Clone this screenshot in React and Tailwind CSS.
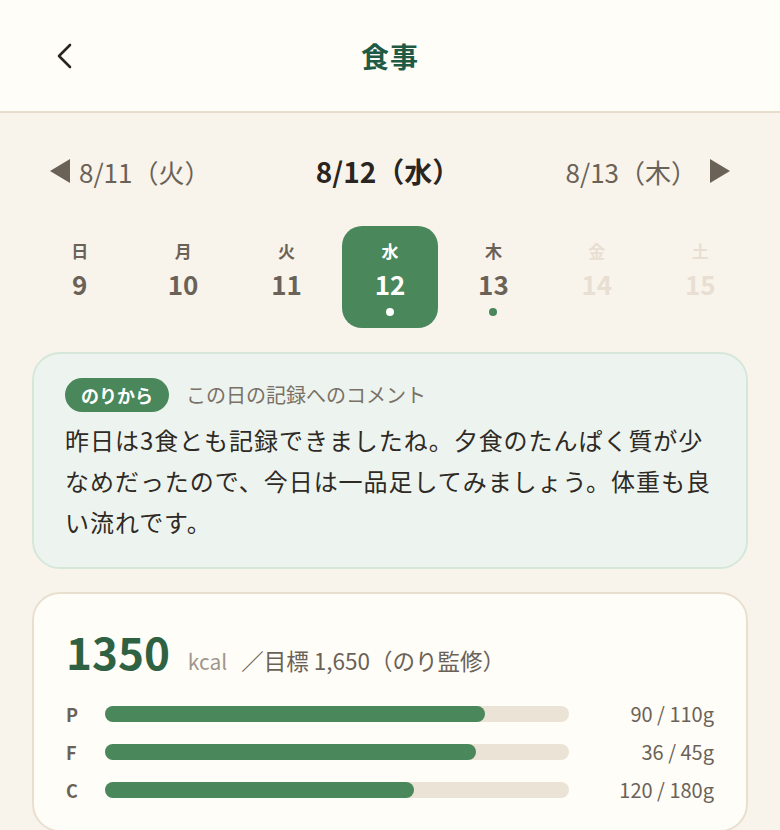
import React from "react";

const days = [
  { w: "日", d: 9, state: "normal" },
  { w: "月", d: 10, state: "normal" },
  { w: "火", d: 11, state: "normal" },
  { w: "水", d: 12, state: "selected" },
  { w: "木", d: 13, state: "dot" },
  { w: "金", d: 14, state: "disabled" },
  { w: "土", d: 15, state: "disabled" },
];

const macros = [
  { k: "P", v: 90, t: 110 },
  { k: "F", v: 36, t: 45 },
  { k: "C", v: 120, t: 180 },
];

function Day({ w, d, state }) {
  const selected = state === "selected";
  const disabled = state === "disabled";
  const color = selected ? "text-white" : disabled ? "text-[#e8dfd2]" : "text-[#6b6257]";
  return (
    <div
      className={`flex h-[102px] flex-col items-center rounded-[20px] pt-[13px] ${
        selected ? "bg-[#4a875b]" : ""
      } ${color}`}
    >
      <div className="text-[17px] font-bold leading-[24px]">{w}</div>
      <div className="mt-[4px] text-[26px] font-bold leading-[34px]">{d}</div>
      <div className="mt-[7px] h-[8px] w-[8px]">
        {selected && <div className="h-[8px] w-[8px] rounded-full bg-white" />}
        {state === "dot" && <div className="h-[8px] w-[8px] rounded-full bg-[#4a875b]" />}
      </div>
    </div>
  );
}

export default function App() {
  return (
    <div
      className="min-h-[830px] w-[780px] bg-[#f8f4ec]"
      style={{ fontFamily: '"Noto Sans CJK JP", "Noto Sans", sans-serif' }}
    >
      <header className="relative flex h-[113px] items-center justify-center border-b-2 border-[#e8dccb] bg-[#fffdf7]">
        <svg
          className="absolute left-[54px] top-[42px]"
          width="22"
          height="28"
          viewBox="0 0 22 28"
          fill="none"
        >
          <path d="M16 3 L5 14 L16 25" stroke="#2a2520" strokeWidth="2.6" strokeLinecap="round" strokeLinejoin="round" />
        </svg>
        <h1 className="text-[28px] font-bold tracking-[0.04em] text-[#1f5a44]">食事</h1>
      </header>

      <main className="px-[32px] pt-[36px]">
        <div className="flex h-[44px] items-center justify-between px-[18px]">
          <div className="flex items-center gap-[9px] text-[26px] text-[#6b6257]">
            <svg width="20" height="24" viewBox="0 0 20 24">
              <path d="M20 0 L0 12 L20 24 Z" fill="#6b6257" />
            </svg>
            <span>8/11（火）</span>
          </div>
          <div className="text-[28px] font-bold text-[#2a2520]">8/12（水）</div>
          <div className="flex items-center gap-[13px] text-[26px] text-[#6b6257]">
            <span>8/13（木）</span>
            <svg width="20" height="24" viewBox="0 0 20 24">
              <path d="M0 0 L20 12 L0 24 Z" fill="#6b6257" />
            </svg>
          </div>
        </div>

        <div className="mt-[33px] grid grid-cols-7 gap-[8px]">
          {days.map((x) => (
            <Day key={x.d} {...x} />
          ))}
        </div>

        <section className="mt-[24px] rounded-[28px] border-2 border-[#d6e7da] bg-[#edf4ef] px-[31px] pb-[25px] pt-[24px]">
          <div className="flex items-center gap-[17px]">
            <span className="flex h-[34px] items-center rounded-full bg-[#4a875b] px-[16px] text-[18px] font-bold text-white">
              のりから
            </span>
            <span className="text-[20px] text-[#7a7065]">この日の記録へのコメント</span>
          </div>
          <p className="mt-[7px] text-[24px] leading-[41px] tracking-[0.04em] text-[#2f2a25]">
            昨日は3食とも記録できましたね。夕食のたんぱく質が少なめだったので、今日は一品足してみましょう。体重も良い流れです。
          </p>
        </section>

        <section className="mt-[23px] rounded-[28px] border-2 border-[#e9dfcf] bg-[#fffdf8] px-[32px] pb-[28px] pt-[29px]">
          <div className="flex items-baseline">
            <span className="text-[44px] font-bold leading-[56px] text-[#2f6242]">1350</span>
            <span className="ml-[18px] text-[21px] text-[#a0978c]">kcal</span>
            <span className="ml-[14px] text-[22.5px] text-[#6b6257]">／目標 1,650（のり監修）</span>
          </div>
          <div className="mt-[23px] flex flex-col gap-[14px]">
            {macros.map((m) => (
              <div key={m.k} className="flex h-[24px] items-center">
                <span className="w-[39px] text-[18px] font-bold text-[#6b6257]">{m.k}</span>
                <div className="h-[16px] w-[464px] rounded-full bg-[#ebe3d5]">
                  <div
                    className="h-[16px] rounded-full bg-[#4a875b]"
                    style={{ width: `${(m.v / m.t) * 100}%` }}
                  />
                </div>
                <span className="flex-1 text-right text-[20px] text-[#6b6257]">
                  {m.v} / {m.t}g
                </span>
              </div>
            ))}
          </div>
        </section>
      </main>
    </div>
  );
}
